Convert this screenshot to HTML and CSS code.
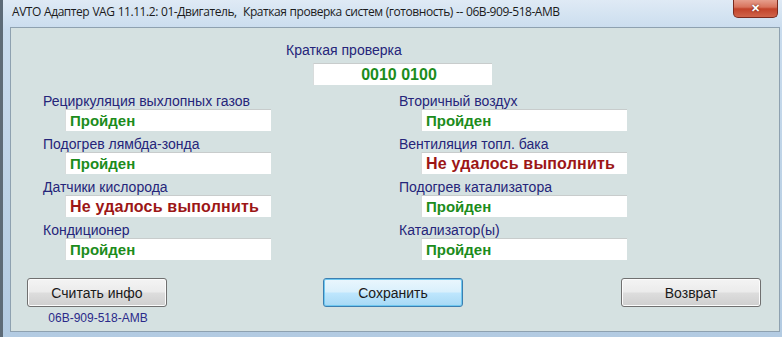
FILE: index.html
```html
<!DOCTYPE html>
<html lang="ru">
<head>
  <meta charset="UTF-8" />
  <title>Краткая проверка систем</title>
  <link rel="stylesheet" href="styles.css">
</head>
<body>

  <div class="window">
    <div class="title-bar">
      <span class="title">AVTO Адаптер VAG 11.11.2: 01-Двигатель,&nbsp; Краткая проверка систем (готовность) -- 06B-909-518-AMB</span>
      <button class="close-btn">&#x2715;</button>
    </div>

    <div class="client">
      <div class="summary">
        <div class="label">Краткая проверка</div>
        <div class="value-box summary-box">0010 0100</div>
      </div>

      <div class="fields">
        <div class="field">
          <div class="label">Рециркуляция выхлопных газов</div>
          <div class="value-box ok">Пройден</div>
        </div>
        <div class="field">
          <div class="label">Вторичный воздух</div>
          <div class="value-box ok">Пройден</div>
        </div>
        <div class="field">
          <div class="label">Подогрев лямбда-зонда</div>
          <div class="value-box ok">Пройден</div>
        </div>
        <div class="field">
          <div class="label">Вентиляция топл. бака</div>
          <div class="value-box fail">Не удалось выполнить</div>
        </div>
        <div class="field">
          <div class="label">Датчики кислорода</div>
          <div class="value-box fail">Не удалось выполнить</div>
        </div>
        <div class="field">
          <div class="label">Подогрев катализатора</div>
          <div class="value-box ok">Пройден</div>
        </div>
        <div class="field">
          <div class="label">Кондиционер</div>
          <div class="value-box ok">Пройден</div>
        </div>
        <div class="field">
          <div class="label">Катализатор(ы)</div>
          <div class="value-box ok">Пройден</div>
        </div>
      </div>

      <div class="button-row">
        <div class="left-group">
          <button class="win-btn">Считать инфо</button>
          <div class="part-no">06B-909-518-AMB</div>
        </div>
        <button class="win-btn focused">Сохранить</button>
        <button class="win-btn back">Возврат</button>
      </div>
    </div>
  </div>

</body>
</html>
```

FILE: styles.css
```css
body {
  margin: 0;
  background-color: #6f7f8c;
  font-family: "Liberation Sans", Arial, sans-serif;
  overflow: hidden;
}

.window {
  width: 790px;
  height: 337px;
  box-sizing: border-box;
  padding: 0 0 5px 7px;
  background: linear-gradient(to bottom, #dfeaf5 0px, #c9dcee 30px, #bcd2e6 200px, #b3cbe2 337px);
  border-left: 3px solid #5d6b77;
  display: flex;
  flex-direction: column;
}

.title-bar {
  height: 27px;
  display: flex;
  align-items: flex-start;
  justify-content: space-between;
}

.title {
  font-family: "Open Sans", "Noto Sans", sans-serif;
  font-size: 12px;
  color: #1b1b1b;
  margin-top: 3px;
  margin-left: 2px;
  letter-spacing: -0.45px;
  word-spacing: 0.5px;
}

.close-btn {
  width: 45px;
  height: 19px;
  margin-right: 12px;
  margin-top: -1px;
  border: 1px solid #7a2a1e;
  border-top: none;
  border-radius: 0 0 5px 5px;
  background: linear-gradient(to bottom, #e8a493 0%, #d8735c 45%, #c2432a 55%, #d0644a 100%);
  color: #fff;
  font-size: 11px;
  font-weight: bold;
  padding: 0;
  text-shadow: 0 0 2px #5a1a10;
}

.client {
  flex: 1;
  margin-right: 10px;
  background-color: #d5e1e1;
  border: 1px solid #8ea1b0;
  padding: 14px 0 0 0;
  display: flex;
  flex-direction: column;
}

.label {
  font-size: 14px;
  line-height: 16px;
  color: #25257a;
  white-space: nowrap;
}

.value-box {
  height: 22px;
  box-sizing: border-box;
  background-color: #fff;
  border-top: 1px solid #c8cccc;
  border-left: 1px solid #d8dcdc;
  font-size: 15px;
  font-weight: bold;
  line-height: 21px;
  padding-left: 4px;
}

.summary {
  margin-left: 275px;
  display: flex;
  flex-direction: column;
  gap: 5px;
}

.summary-box {
  margin-left: 27px;
  width: 179px;
  text-align: center;
  color: #1c8c1c;
  font-size: 16px;
  padding: 0 8px 0 0;
}

.fields {
  display: grid;
  grid-template-columns: 356px 356px;
  row-gap: 5px;
  margin: 8px 0 0 32px;
}

.field .value-box {
  margin-left: 22px;
  width: 206px;
}

.ok {
  color: #1c8c1c;
}

.fail {
  color: #9c1616;
  font-size: 16px;
  letter-spacing: 0.2px;
}

.button-row {
  display: flex;
  align-items: flex-start;
  margin: 18px 0 0 16px;
}

.left-group {
  display: flex;
  flex-direction: column;
  align-items: center;
  width: 140px;
}

.part-no {
  font-size: 12px;
  color: #2a2a8a;
  margin-top: 4px;
  margin-left: 2px;
}

.win-btn {
  width: 140px;
  height: 29px;
  font-family: "Liberation Sans", Arial, sans-serif;
  font-size: 14px;
  color: #1a1a1a;
  border: 1px solid #707070;
  border-radius: 3px;
  background: linear-gradient(to bottom, #f4f4f4 0%, #ebebeb 48%, #dddddd 52%, #cfcfcf 100%);
  box-shadow: inset 0 0 0 1px #fcfcfc;
  padding: 0;
}

.win-btn.focused {
  margin-left: 156px;
  border-color: #3c7fb1;
  background: linear-gradient(to bottom, #eaf6fd 0%, #d9f0fc 48%, #bee6fd 52%, #a7d9f5 100%);
  box-shadow: inset 0 0 0 1px #6fc8f0;
}

.win-btn.back {
  margin-left: 158px;
}
```
